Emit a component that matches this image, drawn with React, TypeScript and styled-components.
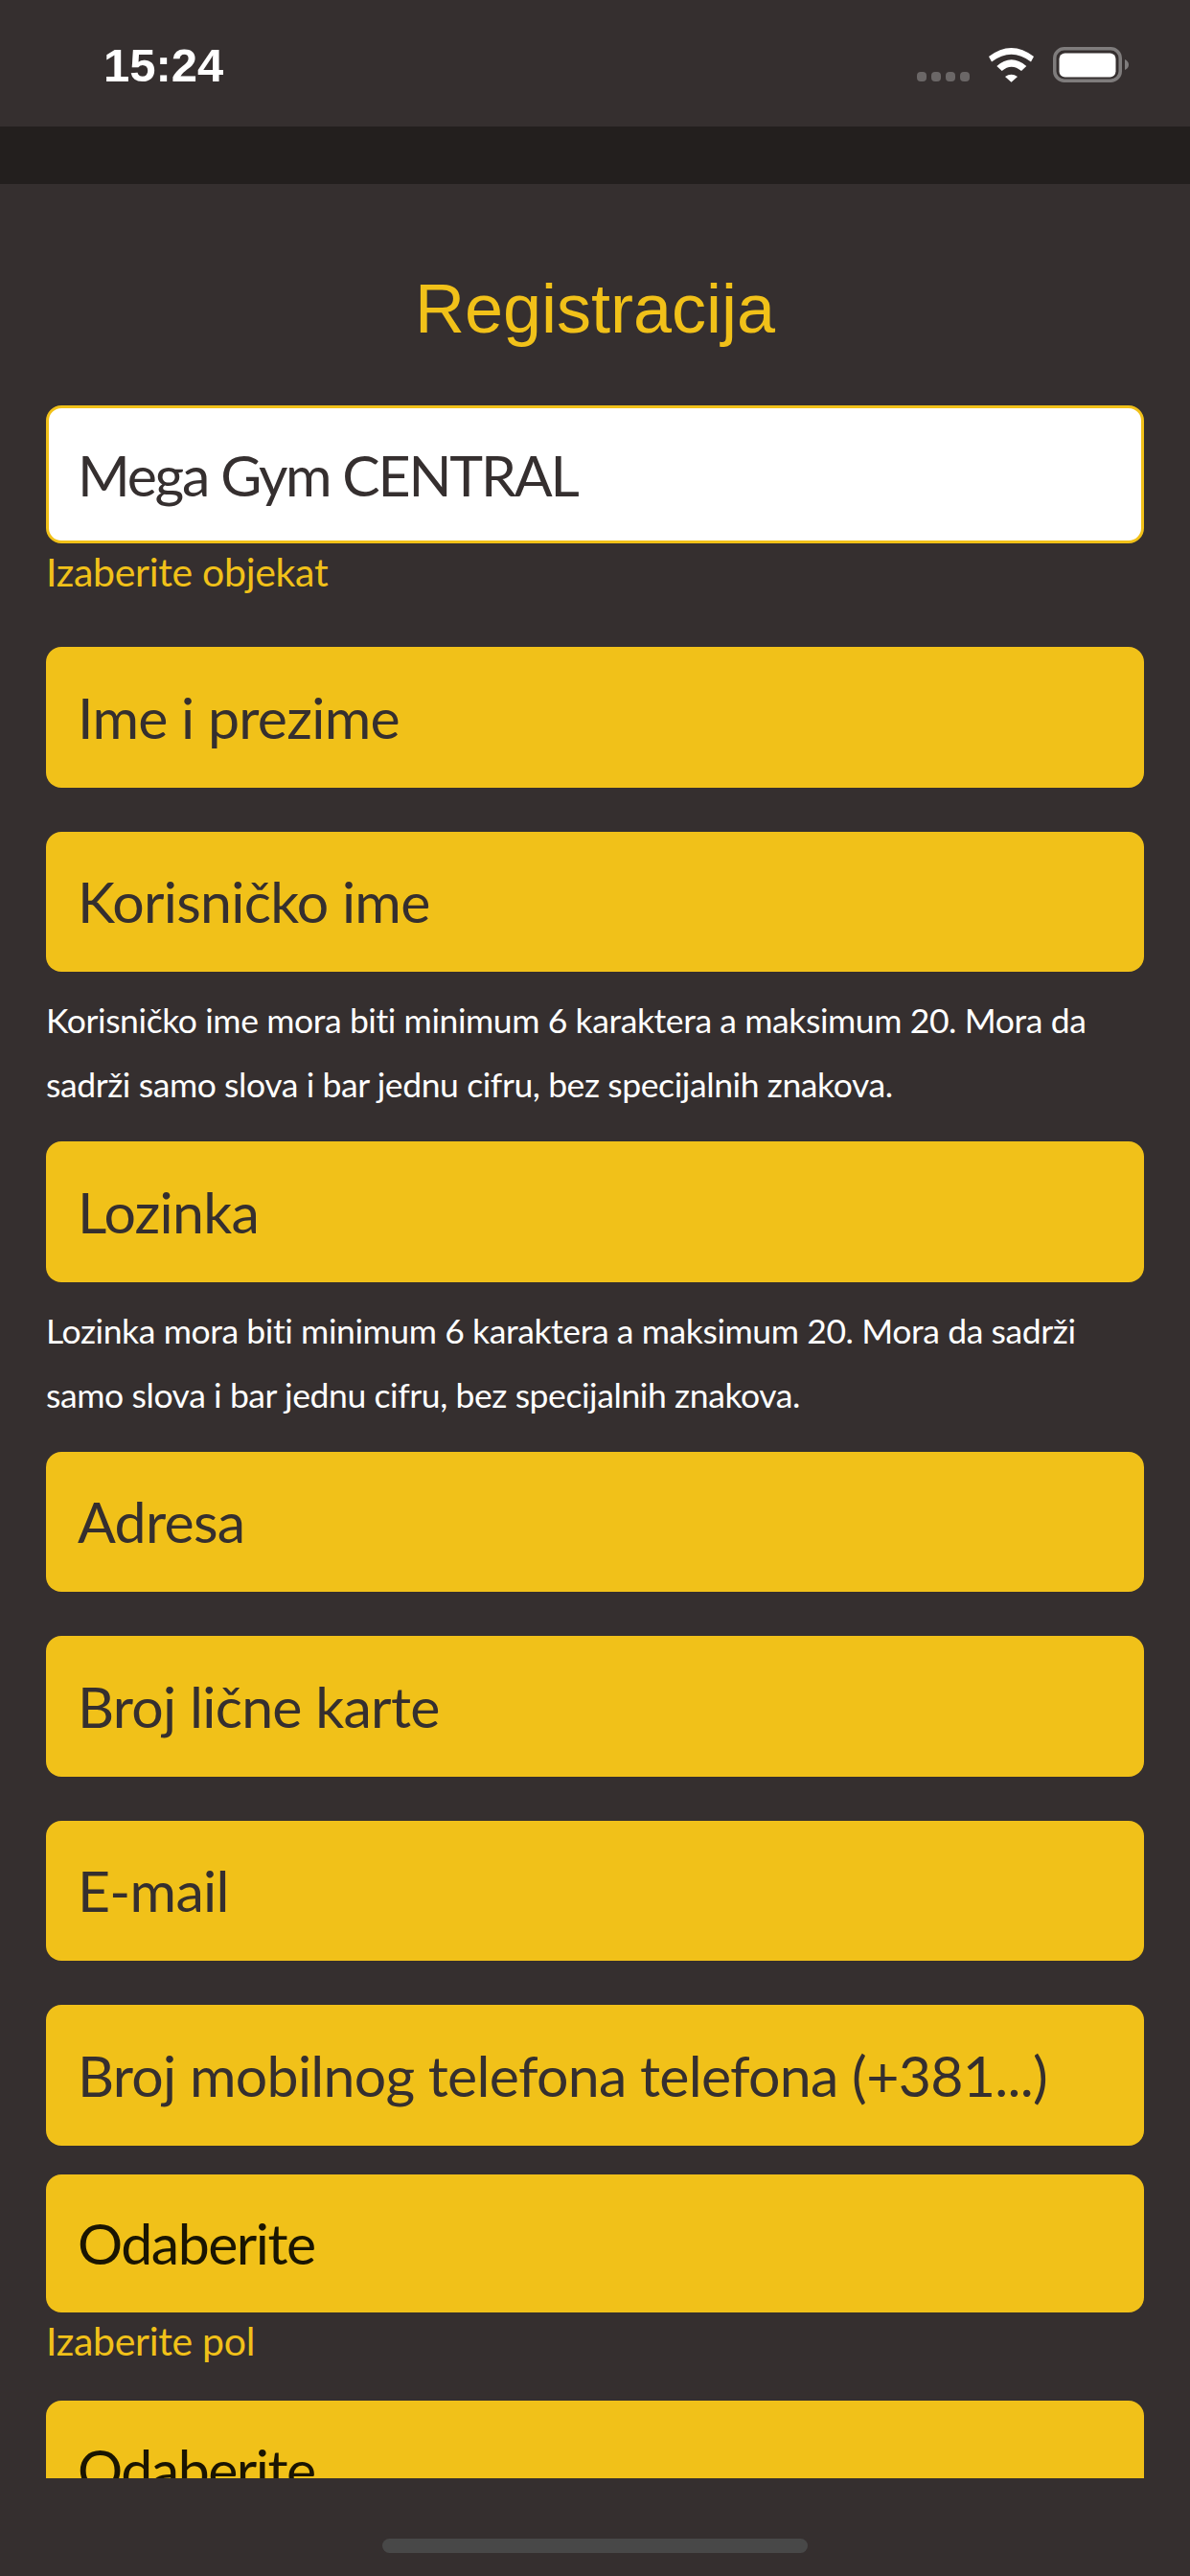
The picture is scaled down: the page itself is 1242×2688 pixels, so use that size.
import React from 'react';
import styled, { createGlobalStyle } from 'styled-components'

const yellow = '#f1c119'
const bodyFont = `Lato, "Noto Sans", sans-serif`

const GlobalStyle = createGlobalStyle`
  html, body {
    margin: 0;
    padding: 0;
    background: #352f2f;
  }
`

const Page = styled.div`
  width: 1242px;
  height: 2688px;
  display: flex;
  flex-direction: column;
  background: #352f2f;
  overflow: hidden;
`

const StatusBar = styled.div`
  height: 132px;
  flex: none;
  box-sizing: border-box;
  padding: 0 64px 0 108px;
  display: flex;
  align-items: center;
  justify-content: space-between;
`

const Time = styled.div`
  font-family: "Liberation Sans", Arial, sans-serif;
  font-weight: 700;
  font-size: 49px;
  color: #fff;
  line-height: 56px;
  margin-top: 4px;
`

const StatusIcons = styled.div`
  display: flex;
  align-items: flex-end;
  margin-top: 2px;
`

const SignalDots = styled.div`
  display: flex;
  gap: 5px;
  margin-right: 20px;
  padding-bottom: 1px;
`

const SignalDot = styled.span`
  width: 10px;
  height: 10px;
  border-radius: 4px;
  background: #6b6767;
`

const NavBar = styled.div`
  height: 60px;
  flex: none;
  background: #231f1e;
`

const Content = styled.div`
  height: 2394px;
  flex: none;
  box-sizing: border-box;
  padding: 94px 48px 0;
  overflow: hidden;
`

const Title = styled.h1`
  margin: 0 0 65px;
  font-family: "Liberation Sans", Arial, sans-serif;
  font-weight: 400;
  font-size: 72px;
  line-height: 72px;
  text-align: center;
  color: ${yellow};
`

const Field = styled.div<{ $gap?: number; $height?: number; $select?: boolean }>`
  height: ${p => p.$height ?? 146.5}px;
  margin-bottom: ${p => p.$gap ?? 0}px;
  box-sizing: border-box;
  padding-left: 33px;
  display: flex;
  align-items: center;
  border-radius: 16px;
  background: ${yellow};
  color: ${p => (p.$select ? '#1a1502' : '#352f2f')};
  font-family: ${bodyFont};
  font-size: 59px;
  letter-spacing: ${p => (p.$select ? '-1.5px' : '-0.7px')};
  white-space: nowrap;
`

const WhiteField = styled(Field)`
  padding-left: 30px;
  background: #fff;
  border: 3px solid ${yellow};
  letter-spacing: -2.2px;
`

const FieldLabel = styled.div<{ $gap: number }>`
  height: 60px;
  margin-bottom: ${p => p.$gap}px;
  font-family: ${bodyFont};
  font-size: 41px;
  letter-spacing: -0.3px;
  line-height: 60px;
  color: ${yellow};
`

const Hint = styled.p`
  margin: 17px 0 26px;
  font-family: ${bodyFont};
  font-size: 35.5px;
  letter-spacing: -0.4px;
  line-height: 67px;
  color: #fff;
`

const Footer = styled.div`
  flex: 1;
  display: flex;
  justify-content: center;
  padding-top: 63px;
`

const HomeBar = styled.div`
  width: 444px;
  height: 15px;
  border-radius: 8px;
  background: #484848;
`

const WifiIcon = () => (
  <svg width="47" height="36" viewBox="0 0 47 36" fill="#fff" style={{ marginRight: 20 }}>
    <path d="M0 9Q23.5 -9 47 9L44 14.5Q23.5 -1.1 3 14.5Z" />
    <path d="M8.3 19Q23.5 5.6 39.3 19L34 24Q23.5 15.4 13.7 24Z" />
    <path d="M17 30Q23.5 25.7 30 30L23.5 35.7Z" />
  </svg>
)

const BatteryIcon = () => (
  <svg width="79" height="37" viewBox="0 0 79 37">
    <rect x="1.75" y="1.75" width="68.5" height="33.5" rx="10" fill="none" stroke="#7f7c7c" strokeWidth="3.5" />
    <rect x="6.5" y="6.5" width="59" height="25" rx="6" fill="#fff" />
    <path d="M75 13Q79 15 79 18.5Q79 22 75 24Z" fill="#7f7c7c" />
  </svg>
)

export default function App() {
  return (
    <Page>
      <GlobalStyle />
      <StatusBar>
        <Time>15:24</Time>
        <StatusIcons>
          <SignalDots>
            <SignalDot />
            <SignalDot />
            <SignalDot />
            <SignalDot />
          </SignalDots>
          <WifiIcon />
          <BatteryIcon />
        </StatusIcons>
      </StatusBar>
      <NavBar />
      <Content>
        <Title>Registracija</Title>
        <WhiteField $height={144}>Mega Gym CENTRAL</WhiteField>
        <FieldLabel $gap={48}>Izaberite objekat</FieldLabel>
        <Field $gap={46}>Ime i prezime</Field>
        <Field>Korisničko ime</Field>
        <Hint>Korisničko ime mora biti minimum 6 karaktera a maksimum 20. Mora da sadrži samo slova i bar jednu cifru, bez specijalnih znakova.</Hint>
        <Field>Lozinka</Field>
        <Hint>Lozinka mora biti minimum 6 karaktera a maksimum 20. Mora da sadrži samo slova i bar jednu cifru, bez specijalnih znakova.</Hint>
        <Field $gap={46}>Adresa</Field>
        <Field $gap={46}>Broj lične karte</Field>
        <Field $gap={46}>E-mail</Field>
        <Field $gap={30}>Broj mobilnog telefona telefona (+381...)</Field>
        <Field $select $height={144}>Odaberite</Field>
        <FieldLabel $gap={32}>Izaberite pol</FieldLabel>
        <Field $select $height={144}>Odaberite</Field>
      </Content>
      <Footer>
        <HomeBar />
      </Footer>
    </Page>
  )
}
